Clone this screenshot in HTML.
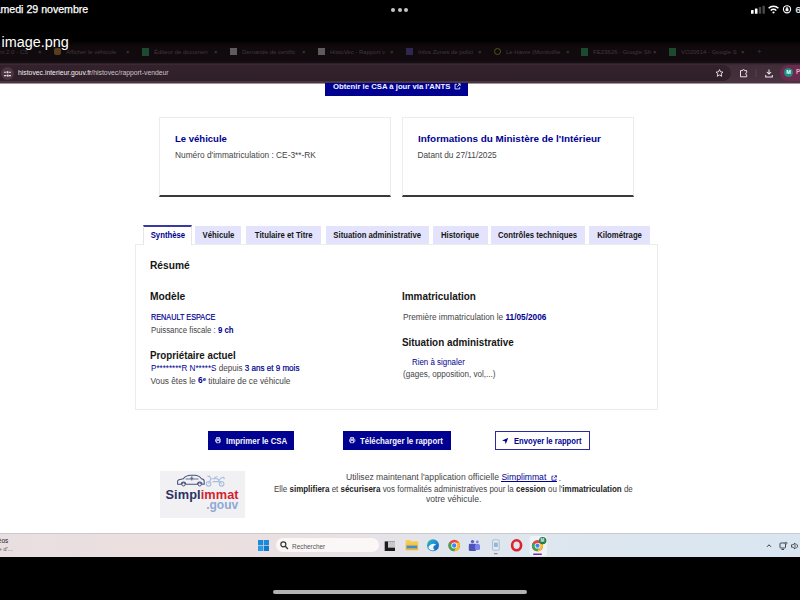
<!DOCTYPE html>
<html lang="fr">
<head>
<meta charset="utf-8">
<title>HistoVec - Rapport vendeur</title>
<style>
*{box-sizing:border-box;margin:0;padding:0}
html,body{width:800px;height:600px;overflow:hidden;background:#000}
body{position:relative;font-family:"Liberation Sans",sans-serif;color:#3a3a3a}
.abs{position:absolute;white-space:nowrap;line-height:1}
#page{position:absolute;left:0;top:83px;width:800px;height:451px;background:#fff;border-top:1px solid #a2969c}
#tabstrip{position:absolute;left:0;top:41px;width:800px;height:23px;background:linear-gradient(#000 0,#0c0609 3px,#100a0d 7px,#110a0e 19px,#1a1117 100%)}
#urlbar{position:absolute;left:0;top:63.400px;width:800px;height:20.200px;background:linear-gradient(#2a1b23 0,#402d38 2px,#432f3b 14px,#4a3742 100%)}
#omni{position:absolute;left:-20px;top:64.600px;width:751px;height:16.100px;border-radius:8px;background:linear-gradient(#33222c,#2f1f28)}
#taskbar{position:absolute;left:0;top:533px;width:800px;height:24px;background:linear-gradient(90deg,#e9dfe1 0,#ecdfdf 25%,#e8e2e6 45%,#dfe6ee 60%,#d9e6f1 100%);border-top:1px solid #cfcaca}
.card{position:absolute;background:#fff;border:1px solid #ececec;border-bottom:2px solid #3a3a3a}
.tab{position:absolute;top:226px;height:18px;background:#e3e3fd;color:#161616;font-weight:bold;font-size:8.5px;line-height:18px;text-align:center;white-space:nowrap}
.tab .tx{display:inline-block;transform:scaleX(.91)}
.tab.on{background:#fff;color:#000091;top:225px;height:20px;border-top:2px solid #3a3aa3;border-left:1px solid #e6e6e6;border-right:1px solid #e6e6e6;line-height:17px}
#panel{position:absolute;left:135px;top:244px;width:523px;height:165.500px;border:1px solid #ececec;background:#fff}
.btn{position:absolute;top:431px;height:19px;background:#000091;color:#f5f5fe;font-weight:bold;font-size:8.5px;line-height:19px;white-space:nowrap}
.btn.o{background:#fff;color:#000091;border:1px solid #2a2aa2;line-height:17px}
.h{font-weight:bold;color:#161616;font-size:10.5px}
.t{font-size:8px;color:#444}
.tt{font-size:6px;color:#43363e}
.tx2{color:#55474f}
.blue{color:#000091}
.b{font-weight:bold}
.m{-webkit-text-stroke:.2px #000091}
</style>
</head>
<body>

<!-- iPad status bar -->
<div id="date" class="abs" style="left:-10.7px;top:4px;font-size:10.6px;color:#fff;-webkit-text-stroke:.25px #fff">samedi 29 novembre</div>
<div class="abs" style="left:391.400px;top:7.500px;width:4px;height:4px;border-radius:50%;background:#c4c4c4"></div>
<div class="abs" style="left:398px;top:7.500px;width:4px;height:4px;border-radius:50%;background:#c4c4c4"></div>
<div class="abs" style="left:404.400px;top:7.500px;width:4px;height:4px;border-radius:50%;background:#c4c4c4"></div>
<svg class="abs" style="left:748px;top:0px" width="52" height="18" viewBox="0 0 52 18">
  <rect x="3" y="10" width="2.600" height="3.800" rx=".5" fill="#fff"/><rect x="6.900" y="8.400" width="2.600" height="5.400" rx=".5" fill="#fff"/><rect x="10.800" y="7" width="2.400" height="6.800" rx=".5" fill="#4a4a4a"/><rect x="14.500" y="5.800" width="2.400" height="8" rx=".5" fill="#4a4a4a"/>
  <path d="M20.600 8.300a7 7 0 0 1 9.800 0" fill="none" stroke="#fff" stroke-width="1.500"/><path d="M22.700 10.500a4 4 0 0 1 5.600 0" fill="none" stroke="#fff" stroke-width="1.500"/><circle cx="25.500" cy="12.500" r="1.100" fill="#fff"/>
  <circle cx="39" cy="9.300" r="3.600" fill="none" stroke="#fff" stroke-width="1.100"/><path d="M37.800 8.800h2.400v2.200h-2.400zM38.300 8.800v-.8a.7.700 0 0 1 1.400 0v.8" fill="#fff" stroke="#fff" stroke-width=".4"/>
</svg>
<div class="abs" style="left:795.500px;top:5px;font-size:9.500px;color:#fff;-webkit-text-stroke:.2px #fff">6</div>

<!-- file title -->
<div id="imgname" class="abs" style="left:1.5px;top:35.300px;font-size:14.39px;color:#fff;z-index:5">image.png</div>

<!-- browser tab strip -->
<div id="tabstrip"></div>
<div class="abs tt" style="left:-4px;top:49px">ent 2.0 - CS</div>
<div class="abs tt tx2" style="left:38px;top:49px">×</div>
<div class="abs" style="left:54px;top:48px;width:7px;height:7px;background:#5a3d1c;border-radius:2px"></div>
<div class="abs tt" style="left:66px;top:49px">Afficher le véhicule</div>
<div class="abs tt tx2" style="left:126px;top:49px">×</div>
<div class="abs" style="left:142px;top:48px;width:7px;height:8px;background:#1b4a30"></div>
<div class="abs tt" style="left:154px;top:49px">Éditeur de documen</div>
<div class="abs tt tx2" style="left:214px;top:49px">×</div>
<div class="abs" style="left:230px;top:48px;width:7px;height:7px;background:#5f5a5e"></div>
<div class="abs tt" style="left:242px;top:49px">Demande de certific</div>
<div class="abs tt tx2" style="left:302px;top:49px">×</div>
<div class="abs" style="left:318px;top:48px;width:7px;height:7px;background:#5f5a5e"></div>
<div class="abs tt" style="left:330px;top:49px">HistoVec - Rapport v</div>
<div class="abs tt tx2" style="left:390px;top:49px">×</div>
<div class="abs" style="left:406px;top:48px;width:7px;height:7px;background:#2e2750"></div>
<div class="abs tt" style="left:418px;top:49px">Infos Zones de polici</div>
<div class="abs tt tx2" style="left:478px;top:49px">×</div>
<div class="abs" style="left:494px;top:48px;width:7px;height:7px;border-radius:50%;border:1.500px solid #55551f"></div>
<div class="abs tt" style="left:506px;top:49px">Le Havre (Montivillie</div>
<div class="abs tt tx2" style="left:566px;top:49px">×</div>
<div class="abs" style="left:581px;top:48px;width:7px;height:8px;background:#1b4a30"></div>
<div class="abs tt" style="left:593px;top:49px">FE23626 - Google Sh</div>
<div class="abs tt tx2" style="left:653px;top:49px">×</div>
<div class="abs" style="left:669px;top:48px;width:7px;height:8px;background:#1b4a30"></div>
<div class="abs tt" style="left:681px;top:49px">VO20614 - Google S</div>
<div class="abs tt tx2" style="left:741px;top:49px">×</div>
<div class="abs tt" style="left:757px;top:48px;font-size:8px">+</div>

<!-- url bar -->
<div id="urlbar"></div>
<div id="omni"></div>
<div class="abs" style="left:1px;top:67px;width:13px;height:13px;border-radius:50%;background:#4b3541"></div>
<svg class="abs" style="left:4px;top:70.500px" width="7" height="6" viewBox="0 0 7 6"><path d="M0 1.200h2M4.500 1.200H7M0 4.600h2.500M5 4.600h2" stroke="#e6dde2" stroke-width="1.100"/><rect x="2.600" y="0.200" width="1.600" height="2" fill="#e6dde2"/><rect x="3" y="3.600" width="1.600" height="2" fill="#e6dde2"/></svg>
<div id="url" class="abs" style="left:17.5px;top:69.3px;font-size:7.2px;transform:scaleX(0.9481);transform-origin:0 0;color:#f4eef1">histovec.interieur.gouv.fr<span style="color:#cdc2c8">/histovec/rapport-vendeur</span></div>
<svg class="abs" style="left:714px;top:67px" width="86" height="12" viewBox="0 0 86 12">
  <path d="M5.500 2.600l1.050 2.250 2.450.3-1.800 1.700.5 2.450-2.200-1.300-2.200 1.300.5-2.450-1.800-1.700 2.450-.3z" fill="none" stroke="#efe6eb" stroke-width=".9"/>
  <path d="M26.500 3.600h2a1.050 1.050 0 0 1 2.100 0h2.100v2.100a1.050 1.050 0 0 0 0 2.100v2h-6.200z" fill="none" stroke="#efe6eb" stroke-width=".95"/>
  <path d="M42 2.500v7.500" stroke="#5e4955" stroke-width=".8"/>
  <path d="M55 2.400v4.600M52.900 5l2.100 2.100 2.100-2.100M51.700 8v1.900h6.600v-1.900" fill="none" stroke="#efe6eb" stroke-width="1.050"/>
</svg>
<div class="abs" style="left:780px;top:65.300px;width:30px;height:15.600px;border-radius:8px;background:#6a2a4e"></div>
<div class="abs" style="left:783.700px;top:67.800px;width:9.600px;height:9.600px;border-radius:50%;background:#17907f;color:#fff;font-size:5.500px;line-height:9.600px;text-align:center;font-weight:bold">M</div>
<div class="abs" style="left:796px;top:69px;font-size:6.500px;color:#eaa6cb;font-weight:bold">P</div>

<!-- web page -->
<div id="page"></div>

<div class="abs" style="left:325px;top:83px;width:143px;height:12.600px;background:#000091"></div>
<div id="obt" class="abs b" style="left:332.5px;top:82.8px;font-size:7.8px;transform:scaleX(0.9899);transform-origin:0 0;color:#f5f5fe">Obtenir le CSA à jour via l'ANTS</div>
<svg class="abs" style="left:454px;top:83px" width="7" height="7" viewBox="0 0 8 8"><path d="M3.200 1.500H1.200v5.300h5.300V4.800M4.800 1h2.200v2.200M7 1L3.800 4.200" fill="none" stroke="#f5f5fe" stroke-width="1"/></svg>

<!-- cards -->
<div class="card" style="left:159px;top:117px;width:232px;height:80px"></div>
<div class="card" style="left:402px;top:117px;width:232px;height:80px"></div>
<div id="c1t" class="abs b blue" style="left:175.0px;top:133.7px;font-size:9.8px;transform:scaleX(0.9718);transform-origin:0 0;">Le véhicule</div>
<div id="c1s" class="abs t" style="left:175.0px;top:151.0px;font-size:8.3px;transform:scaleX(1.0036);transform-origin:0 0;">Numéro d'immatriculation : CE-3**-RK</div>
<div id="c2t" class="abs b blue" style="left:417.5px;top:133.6px;font-size:9.9px;transform:scaleX(1.0028);transform-origin:0 0;">Informations du Ministère de l'Intérieur</div>
<div id="c2s" class="abs t" style="left:417.5px;top:151.0px;font-size:8.3px;">Datant du 27/11/2025</div>

<!-- tabs -->
<div id="panel"></div>
<div class="tab on" style="left:143px;width:49px"><span class="tx">Synthèse</span></div>
<div class="tab" style="left:195px;width:46px"><span class="tx">Véhicule</span></div>
<div class="tab" style="left:246px;width:75px"><span class="tx">Titulaire et Titre</span></div>
<div class="tab" style="left:326px;width:103px"><span class="tx">Situation administrative</span></div>
<div class="tab" style="left:433px;width:55px"><span class="tx">Historique</span></div>
<div class="tab" style="left:491px;width:93.500px"><span class="tx">Contrôles techniques</span></div>
<div class="tab" style="left:589px;width:61px"><span class="tx">Kilométrage</span></div>

<!-- panel content -->
<div id="resume" class="abs h" style="left:150.0px;top:260.7px;font-size:10.4px;transform:scaleX(0.9815);transform-origin:0 0;">Résumé</div>
<div id="modele" class="abs h" style="left:150.0px;top:292.2px;font-size:10.4px;transform:scaleX(0.9859);transform-origin:0 0;">Modèle</div>
<div id="renault" class="abs t blue m" style="left:150.5px;top:312.5px;font-size:8.3px;transform:scaleX(0.8767);transform-origin:0 0;">RENAULT ESPACE</div>
<div id="puiss" class="abs t" style="left:150.5px;top:325.5px;font-size:8.3px;transform:scaleX(0.9425);transform-origin:0 0;">Puissance fiscale : <span class="blue b">9 ch</span></div>
<div id="proprio" class="abs h" style="left:150.0px;top:351.2px;font-size:10.4px;transform:scaleX(0.9391);transform-origin:0 0;">Propriétaire actuel</div>
<div id="pname" class="abs t" style="left:150.5px;top:364.0px;font-size:8.3px;transform:scaleX(0.9722);transform-origin:0 0;"><span class="blue">P********R N*****S</span> depuis <span class="blue m">3 ans et 9 mois</span></div>
<div id="vous" class="abs t" style="left:150.5px;top:375.5px;font-size:8.3px;">Vous êtes le <span class="blue b">6<span style="font-size:6px;vertical-align:2.500px">e</span></span> titulaire de ce véhicule</div>

<div id="immat" class="abs h" style="left:402.0px;top:292.2px;font-size:10.4px;transform:scaleX(0.9543);transform-origin:0 0;">Immatriculation</div>
<div id="prem" class="abs t" style="left:402.5px;top:312.5px;font-size:8.3px;transform:scaleX(0.9965);transform-origin:0 0;">Première immatriculation le <span class="blue b">11/05/2006</span></div>
<div id="situ" class="abs h" style="left:401.800px;top:338.2px;font-size:10.4px;transform:scaleX(0.9488);transform-origin:0 0;">Situation administrative</div>
<div id="rien" class="abs t blue" style="left:411.5px;top:358.0px;font-size:8.3px;transform:scaleX(0.9538);transform-origin:0 0;">Rien à signaler</div>
<div id="gages" class="abs t" style="left:402.5px;top:369.5px;font-size:8.3px;transform:scaleX(0.9737);transform-origin:0 0;">(gages, opposition, vol,...)</div>

<!-- buttons -->
<div class="btn" style="left:207.500px;width:86.500px"></div>
<div class="btn" style="left:342.500px;width:108.500px"></div>
<div class="btn o" style="left:494.500px;width:95.500px"></div>
<div id="b1" class="abs b" style="left:226.0px;top:436.5px;font-size:8.6px;transform:scaleX(0.9167);transform-origin:0 0;color:#f5f5fe">Imprimer le CSA</div>
<div id="b2" class="abs b" style="left:360.0px;top:436.5px;font-size:8.6px;transform:scaleX(0.9129);transform-origin:0 0;color:#f5f5fe">Télécharger le rapport</div>
<div id="b3" class="abs b blue" style="left:513.5px;top:436.5px;font-size:8.6px;transform:scaleX(0.8882);transform-origin:0 0;">Envoyer le rapport</div>
<svg class="abs" style="left:214.600px;top:437.300px" width="6.400" height="6.400" viewBox="0 0 8 8"><rect x="2.200" y=".6" width="3.600" height="2.200" fill="none" stroke="#f5f5fe" stroke-width=".9"/><rect x=".7" y="2.600" width="6.600" height="3.600" rx=".9" fill="none" stroke="#f5f5fe" stroke-width="1"/><rect x="2.200" y="4.300" width="3.600" height="3" fill="#000091" stroke="#f5f5fe" stroke-width=".9"/></svg>
<svg class="abs" style="left:349.300px;top:437.300px" width="6.400" height="6.400" viewBox="0 0 8 8"><rect x="2.200" y=".6" width="3.600" height="2.200" fill="none" stroke="#f5f5fe" stroke-width=".9"/><rect x=".7" y="2.600" width="6.600" height="3.600" rx=".9" fill="none" stroke="#f5f5fe" stroke-width="1"/><rect x="2.200" y="4.300" width="3.600" height="3" fill="#000091" stroke="#f5f5fe" stroke-width=".9"/></svg>
<svg class="abs" style="left:502.300px;top:437.500px" width="6.200" height="6.200" viewBox="0 0 7 7"><path d="M0 2.800L7 0 4.200 7 3.400 3.600z" fill="#000091"/></svg>

<!-- simplimmat -->
<div class="abs" style="left:160px;top:471px;width:85px;height:47px;background:#f1f1f3"></div>
<svg class="abs" style="left:176px;top:473px" width="52" height="15" viewBox="0 0 52 15">
  <path d="M1.600 11.200V8.400Q1.600 7.100 3 6.700L7.200 5.800Q10.200 2.300 14.800 2.300H18.600Q22.800 2.300 25.400 5.700Q28.200 6.100 28.200 8.200V11.200H25.900A2.200 2.200 0 0 0 21.500 11.200H9.700A2.200 2.200 0 0 0 5.300 11.200Z" fill="none" stroke="#46527e" stroke-width="1.050"/>
  <circle cx="7.500" cy="11.400" r="1.600" fill="none" stroke="#46527e" stroke-width="1"/><circle cx="23.700" cy="11.400" r="1.600" fill="none" stroke="#46527e" stroke-width="1"/>
  <path d="M9.500 6H22.500M15.800 3.200V7.600M14.200 5.200H17.400" fill="none" stroke="#46527e" stroke-width=".8"/>
  <circle cx="32.600" cy="10.800" r="2.300" fill="none" stroke="#a8bee0" stroke-width="1.100"/><circle cx="45.600" cy="10.800" r="2.300" fill="none" stroke="#a8bee0" stroke-width="1.100"/>
  <path d="M32.600 10.800L35 5.800H41.500L45.600 10.800M35 5.800L33.600 3.400H31.400M36.500 8.600H42.500Q43.800 4.600 47.600 4.200L48.400 6.200M38 5.800Q39 3.600 41.500 3.800" fill="none" stroke="#a8bee0" stroke-width="1.100"/>
</svg>
<div id="simpl" class="abs b" style="left:165.5px;top:489.2px;font-size:12.74px;color:#2a3166;letter-spacing:.1px">Simpl<span style="color:#d2232d">immat</span></div>
<div id="gouv" class="abs b" style="left:206.200px;top:498.800px;font-size:12px;color:#8fa8d6">.gouv</div>

<div id="l1" class="abs t" style="left:345.5px;top:473.0px;font-size:8.3px;transform:scaleX(1.0363);transform-origin:0 0;">Utilisez maintenant l'application officielle <span class="blue">Simplimmat</span></div>
<div class="abs" style="left:500.700px;top:481.300px;width:56.500px;height:.9px;background:#000091"></div>
<svg class="abs" style="left:551px;top:474.500px" width="6.200" height="6.200" viewBox="0 0 8 8"><path d="M3.200 1.500H1.200v5.300h5.300V4.800M4.800 1h2.200v2.200M7 1L3.800 4.200" fill="none" stroke="#000091" stroke-width="1"/></svg>
<div class="abs t" style="left:558.700px;top:473.500px;font-size:8.300px">.</div>
<div id="l2" class="abs t" style="left:273.5px;top:484.5px;font-size:8.3px;transform:scaleX(0.9611);transform-origin:0 0;">Elle <b style="color:#222">simplifiera</b> et <b style="color:#222">sécurisera</b> vos formalités administratives pour la <b style="color:#222">cession</b> ou l'<b style="color:#222">immatriculation</b> de</div>
<div id="l3" class="abs t" style="left:426.0px;top:495.0px;font-size:8.3px;transform:scaleX(1.0356);transform-origin:0 0;">votre véhicule.</div>

<!-- windows taskbar -->
<div id="taskbar"></div>
<div class="abs" style="left:-11.500px;top:538px;font-size:6.500px;color:#222">Vidéos</div>
<div class="abs" style="left:-5px;top:546px;font-size:6px;color:#555">ée d'...</div>
<svg class="abs" style="left:258px;top:540px" width="11" height="11" viewBox="0 0 11 11"><rect x="0" y="0" width="5.200" height="5.200" fill="#1c8ad8"/><rect x="5.800" y="0" width="5.200" height="5.200" fill="#1c8ad8"/><rect x="0" y="5.800" width="5.200" height="5.200" fill="#2a9be6"/><rect x="5.800" y="5.800" width="5.200" height="5.200" fill="#1178cf"/></svg>
<div class="abs" style="left:276px;top:538px;width:103px;height:14px;border-radius:7px;background:#fbf7f7"></div>
<svg class="abs" style="left:280.300px;top:541.200px" width="8.400" height="8.400" viewBox="0 0 7 7"><circle cx="2.800" cy="2.800" r="2.100" fill="none" stroke="#333" stroke-width="1"/><path d="M4.400 4.400L6.600 6.600" stroke="#333" stroke-width="1.100"/></svg>
<div id="rech" class="abs" style="left:292.0px;top:542.6px;font-size:7.0px;transform:scaleX(0.9167);transform-origin:0 0;color:#555">Rechercher</div>
<!-- taskbar icons -->
<svg class="abs" style="left:380px;top:534px" width="180" height="23" viewBox="0 0 180 23">
  <defs>
    <linearGradient id="eg" x1="0" y1="0" x2="1" y2="1"><stop offset="0" stop-color="#35c1a0"/><stop offset=".45" stop-color="#1e8fd6"/><stop offset="1" stop-color="#1658a8"/></linearGradient>
    <linearGradient id="fg" x1="0" y1="0" x2="0" y2="1"><stop offset="0" stop-color="#f8d35a"/><stop offset="1" stop-color="#f0b429"/></linearGradient>
  </defs>
  <rect x="149.600" y="2" width="17.400" height="20" rx="2" fill="#f4f6fa" opacity=".75"/>
  <rect x="4.700" y="7.400" width="10.300" height="9.600" fill="#1c1c1c"/>
  <rect x="8" y="7.400" width="7" height="6.300" fill="#c9c7ca"/>
  <path d="M25.600 7a1 1 0 0 1 1-1h3.400l1.200 1.200h6a1 1 0 0 1 1 1v7a1 1 0 0 1-1 1h-10.600a1 1 0 0 1-1-1z" fill="url(#fg)"/>
  <rect x="26.600" y="11.600" width="10.600" height="2.700" fill="#3d8fde"/>
  <circle cx="53" cy="11.300" r="6" fill="url(#eg)"/>
  <path d="M48.300 13.500c1.500-3.500 5-4.500 8-3-1.800.4-3 1.600-3 3.300 0 1.200.8 2 2 2.300-2.800 1-6 .3-7-2.600z" fill="#e9f5fb"/>
  <circle cx="74.200" cy="11.500" r="5.800" fill="#e8453c"/>
  <path d="M74.200 11.500L69.200 8.600a5.800 5.800 0 0 0 4.800 8.700l2.800-4.900z" fill="#3aa757"/>
  <path d="M74.200 11.500l2.600.9-2.800 4.900a5.800 5.800 0 0 0 5.200-8.700h-5z" fill="#f6bf26"/>
  <circle cx="74.200" cy="11.500" r="2.900" fill="#fff"/><circle cx="74.200" cy="11.500" r="2.200" fill="#4285f4"/>
  <circle cx="92.500" cy="7.600" r="1.700" fill="#5b5fc7"/><circle cx="97.300" cy="8" r="1.400" fill="#7b83eb"/>
  <rect x="88.800" y="9.800" width="7.400" height="7.200" rx="1.200" fill="#4f52b8"/><rect x="95" y="10" width="5" height="6" rx="1.500" fill="#7b83eb"/>
  <rect x="112.600" y="5.800" width="6.600" height="10.400" rx="1" fill="#e3ebf2" stroke="#9fb0bf" stroke-width=".8"/>
  <rect x="114" y="8.600" width="3.800" height="4.400" fill="#8fb8da"/>
  <rect x="114" y="19.200" width="3.600" height="1" fill="#7a7a7a"/>
  <ellipse cx="136.600" cy="11.300" rx="4.500" ry="5" fill="none" stroke="#e0202a" stroke-width="2.600"/>
  <circle cx="157.500" cy="11.700" r="5.600" fill="#e8453c"/>
  <path d="M157.500 11.700l-4.850-2.800a5.600 5.600 0 0 0 4.600 8.400l2.700-4.700z" fill="#3aa757"/>
  <path d="M157.500 11.700l2.500.9-2.700 4.700a5.600 5.600 0 0 0 5-8.400h-4.800z" fill="#f6bf26"/>
  <circle cx="157.500" cy="11.700" r="2.800" fill="#fff"/><circle cx="157.500" cy="11.700" r="2.100" fill="#4285f4"/>
  <circle cx="162.700" cy="6.600" r="3.700" fill="#1f7a4c"/>
  <rect x="153" y="19.400" width="9" height="1.600" rx=".8" fill="#7b2f9a"/>
</svg>
<div class="abs b" style="left:540.500px;top:538.500px;font-size:4.500px;color:#e9f3ec">M</div>
<svg class="abs" style="left:764px;top:540px" width="36" height="12" viewBox="0 0 36 12"><path d="M3 6.800L5 4.800l2 2" fill="none" stroke="#333" stroke-width="1"/><rect x="16" y="3" width="5.500" height="5" rx=".8" fill="none" stroke="#333" stroke-width=".9"/><path d="M17.500 9.500h2.500" stroke="#333" stroke-width=".9"/><circle cx="22" cy="3.200" r="1" fill="#dce7f0" stroke="#333" stroke-width=".7"/><path d="M27.500 4.800h1.500l2-1.800v6l-2-1.800h-1.500z" fill="none" stroke="#333" stroke-width=".8"/><path d="M32.500 3.800a3 3 0 0 1 0 4.400" fill="none" stroke="#333" stroke-width=".8"/></svg>

<!-- home indicator -->
<div class="abs" style="left:273px;top:589.500px;width:254px;height:4px;border-radius:2px;background:#b2b2b2"></div>

</body>
</html>
